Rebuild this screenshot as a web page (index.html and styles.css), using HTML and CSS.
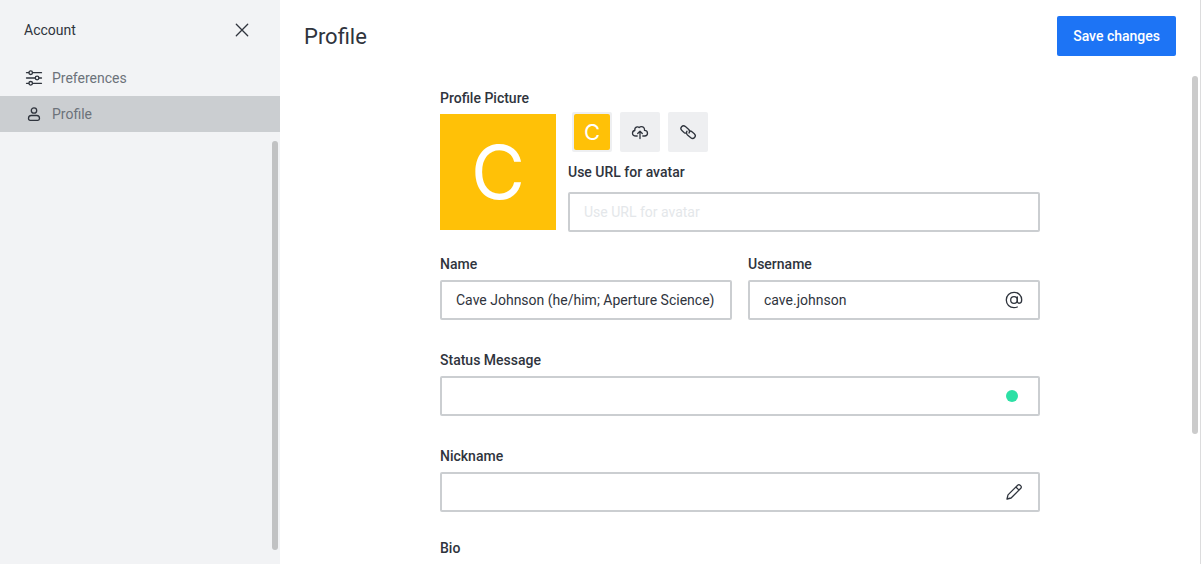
FILE: index.html
```html
<!DOCTYPE html>
<html lang="en">
<head>
<meta charset="utf-8">
<meta name="viewport" content="width=device-width, initial-scale=1">
<title>Profile</title>
<link rel="stylesheet" href="styles.css">
</head>
<body>
<div class="app">
  <aside class="sidebar">
    <header class="sidebar-header">
      <h2 class="sidebar-title">Account</h2>
      <button class="close" type="button" aria-label="Close">
        <svg class="icon" viewBox="0 0 20 20"><path d="M4.300 4.300 15.700 15.700M15.700 4.300 4.300 15.700"/></svg>
      </button>
    </header>
    <nav class="menu">
      <a class="menu-item" href="#preferences">
        <svg class="icon" viewBox="0 0 20 20"><path d="M2.500 4.700H4.900M8.500 4.700H17.500M2.500 10H11.300M14.900 10H17.500M2.500 15.300H4.900M8.500 15.300H17.500"/><circle cx="6.700" cy="4.700" r="1.800"/><circle cx="13.100" cy="10" r="1.800"/><circle cx="6.700" cy="15.300" r="1.800"/></svg>
        <span>Preferences</span>
      </a>
      <a class="menu-item active" href="#profile" aria-current="page">
        <svg class="icon" viewBox="0 0 20 20"><circle cx="10" cy="6.500" r="2.700"/><path d="M7.200 11.500H12.800C14.600 11.500 15.500 13 15.500 14.600C15.500 15.700 14.900 16.300 13.900 16.300H6.100C5.100 16.300 4.500 15.700 4.500 14.600C4.500 13 5.400 11.500 7.200 11.500Z"/></svg>
        <span>Profile</span>
      </a>
    </nav>
    <div class="scroll-track sidebar-track"><div class="scroll-thumb"></div></div>
  </aside>

  <main class="page">
    <header class="page-header">
      <h1 class="page-title">Profile</h1>
      <button class="save" type="submit" form="profile-form">Save changes</button>
    </header>
    <div class="page-content">
      <form class="form" id="profile-form">
        <section class="picture">
          <h3 class="label">Profile Picture</h3>
          <div class="picture-row">
            <div class="avatar">C</div>
            <div class="picture-controls">
              <div class="picture-buttons">
                <button class="square" type="button" aria-label="Use default avatar"><span class="avatar-small">C</span></button>
                <button class="square" type="button" aria-label="Upload avatar">
                  <svg class="icon" viewBox="0 0 20 20"><path d="M7.200 14H6C3.800 14 2.500 12.800 2.500 11.200C2.500 9.700 3.500 8.700 4.800 8.500C4.500 6.500 5.500 5.200 7.100 4.900C7.900 4.800 8.700 5 9.200 5.500C10.300 4.200 12.600 4.300 13.700 5.500C14.500 6.400 14.700 7.400 14.500 8.400C16.400 8.500 17.500 9.700 17.500 11.200C17.500 12.800 16.200 14 14.600 14H12.800M10 16.500V9.500M7.700 11.500 10 9.200 12.300 11.500"/></svg>
                </button>
                <button class="square" type="button" aria-label="Add avatar from URL">
                  <svg class="icon" viewBox="0 0 20 20"><path d="M7.800 11.200C7.200 11.200 6.500 10.900 6 10.500L3.900 8.600C2.700 7.500 2.600 5.900 3.600 4.800C4.600 3.700 6.200 3.600 7.400 4.600L10.500 7.300C11.700 8.400 11.900 9.800 11 11M12.200 9C12.800 9 13.500 9.300 14 9.700L16.300 11.700C17.500 12.800 17.600 14.400 16.600 15.500C15.600 16.600 14 16.700 12.800 15.700L9.500 12.900C8.300 11.800 8.100 10.400 9 9.200"/></svg>
                </button>
              </div>
              <label class="label" for="avatar-url">Use URL for avatar</label>
              <div class="input-box"><input class="input" id="avatar-url" type="text" placeholder="Use URL for avatar"></div>
            </div>
          </div>
        </section>

        <div class="field-row">
          <div class="field">
            <label class="label" for="name">Name</label>
            <div class="input-box"><input class="input" id="name" type="text" value="Cave Johnson (he/him; Aperture Science)"></div>
          </div>
          <div class="field">
            <label class="label" for="username">Username</label>
            <div class="input-box">
              <input class="input" id="username" type="text" value="cave.johnson">
              <svg class="icon" viewBox="0 0 20 20"><circle cx="10" cy="10" r="3.300"/><path d="M13.300 6.800V11.300C13.300 14 17.700 14.200 17.700 9.700C17.700 5.500 14.400 2.300 10.100 2.300C5.600 2.300 2.300 5.600 2.300 10C2.300 14.400 5.600 17.700 10 17.700C11.200 17.700 12.300 17.500 13.300 17"/></svg>
            </div>
          </div>
        </div>

        <div class="field">
          <label class="label" for="status">Status Message</label>
          <div class="input-box">
            <input class="input" id="status" type="text">
            <button class="status" type="button" aria-label="Online"></button>
          </div>
        </div>

        <div class="field">
          <label class="label" for="nickname">Nickname</label>
          <div class="input-box">
            <input class="input" id="nickname" type="text">
            <svg class="icon" viewBox="0 0 20 20"><path d="M3 17 4 12.900 13.700 3.200C14.400 2.500 15.400 2.500 16.100 3.200L16.800 3.900C17.500 4.600 17.500 5.600 16.800 6.300L7.100 16ZM11.900 5 15 8.100"/></svg>
          </div>
        </div>

        <div class="field field-bio">
          <label class="label" for="bio">Bio</label>
          <textarea class="input-box bio" id="bio" rows="3"></textarea>
        </div>
      </form>
    </div>
    <div class="scroll-track page-track"><div class="scroll-thumb"></div></div>
  </main>
</div>
</body>
</html>
```
FILE: styles.css
```css
*,
*::before,
*::after {
  box-sizing: border-box;
}

body {
  margin: 0;
  background: #fff;
  color: #2f343d;
  font: 400 14px/20px Roboto, "Liberation Sans", sans-serif;
}

h1,
h2,
h3 {
  margin: 0;
}

button,
input,
textarea {
  margin: 0;
  font: inherit;
  color: inherit;
}

button {
  padding: 0;
  border: 0;
  background: none;
  cursor: pointer;
}

.app {
  display: flex;
  height: 100vh;
  overflow: hidden;
  border-right: 1px solid #dcdcdd;
}

.icon {
  display: block;
  flex: none;
  width: 20px;
  height: 20px;
  fill: none;
  stroke: #2f343d;
  stroke-width: 1.3;
  stroke-linecap: round;
  stroke-linejoin: round;
}

/* Sidebar */

.sidebar {
  position: relative;
  flex: none;
  width: 280px;
  background: #f2f3f5;
}

.sidebar-header {
  display: flex;
  align-items: center;
  justify-content: space-between;
  height: 60px;
  padding: 0 28px 0 24px;
}

.sidebar-title {
  font-size: 14px;
  font-weight: 400;
}

.menu-item {
  display: flex;
  align-items: center;
  gap: 8px;
  height: 36px;
  padding: 0 24px;
  color: #6c727a;
  text-decoration: none;
}

.menu-item.active {
  background: #cbced1;
}

/* Page */

.page {
  position: relative;
  display: flex;
  flex: 1;
  flex-direction: column;
  min-width: 0;
}

.page-header {
  display: flex;
  flex: none;
  align-items: center;
  justify-content: space-between;
  padding: 16px 24px;
}

.page-title {
  padding-top: 2px;
  font-size: 22px;
  font-weight: 400;
  line-height: 32px;
}

.save {
  height: 40px;
  padding: 0 16px;
  border-radius: 2px;
  background: #1d74f5;
  color: #fff;
  font-weight: 500;
}

.page-content {
  flex: 1;
  min-height: 0;
  padding: 16px 24px;
  overflow: hidden;
}

.form {
  display: flex;
  flex-direction: column;
  gap: 30px;
  max-width: 600px;
  margin: 0 auto;
}

.label {
  display: block;
  font-size: 14px;
  font-weight: 500;
  line-height: 20px;
}

.input-box {
  display: flex;
  align-items: center;
  width: 100%;
  min-height: 40px;
  padding: 0 14px;
  border: 2px solid #cbced1;
  border-radius: 2px;
  background: #fff;
}

.input {
  flex: 1;
  min-width: 0;
  height: 36px;
  padding: 0;
  border: 0;
  outline: 0;
  background: none;
}

.input::placeholder {
  color: #e4e7ea;
  opacity: 1;
}

.field {
  display: flex;
  flex: 1;
  flex-direction: column;
  gap: 6px;
  min-width: 0;
}

.field-row {
  display: flex;
  gap: 16px;
}

.field-bio {
  margin-top: -4px;
}

.bio {
  padding: 8px 14px;
  resize: none;
}

.status {
  width: 12px;
  height: 12px;
  margin-right: 6px;
  border-radius: 50%;
  background: #2de0a5;
}

/* Profile picture */

.picture {
  margin-bottom: -8px;
}

.picture-row {
  display: flex;
  align-items: center;
  gap: 12px;
  padding-top: 4px;
}

.avatar {
  display: flex;
  flex: none;
  align-items: center;
  justify-content: center;
  width: 116px;
  height: 116px;
  background: #ffc107;
  color: #fff;
  font: 400 74px/80px Inter, "Liberation Sans", sans-serif;
}

.picture-controls {
  display: flex;
  flex: 1;
  flex-direction: column;
  gap: 10px;
}

.picture-buttons {
  display: flex;
  gap: 8px;
  padding-left: 4px;
}

.square {
  display: flex;
  align-items: center;
  justify-content: center;
  width: 40px;
  height: 40px;
  border-radius: 2px;
  background: #eeeff1;
}

.avatar-small {
  display: flex;
  align-items: center;
  justify-content: center;
  width: 36px;
  height: 36px;
  border-radius: 2px;
  background: #ffc107;
  color: #fff;
  font: 400 22px/24px Inter, "Liberation Sans", sans-serif;
}

/* Overlay scrollbars */

.scroll-track {
  position: absolute;
  right: 2px;
  width: 6px;
}

.sidebar-track {
  top: 141px;
  bottom: 14px;
}

.page-track {
  top: 76px;
  bottom: 130px;
}

.scroll-thumb {
  height: 100%;
  border-radius: 3px;
  background: #cbcbcb;
}

.sidebar-track .scroll-thumb {
  background: #c1c2c3;
}
```
